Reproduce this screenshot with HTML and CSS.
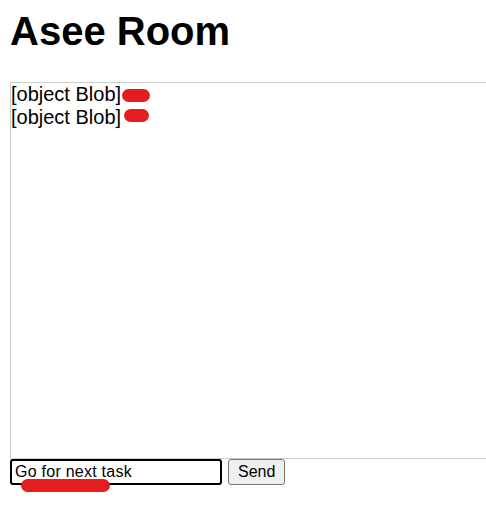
FILE: index.html
```html
<!DOCTYPE html>
<html>
<head>
<meta charset="utf-8">
<title>Asee Room</title>
<link rel="stylesheet" href="styles.css">
</head>
<body>
<h1 class="title">Asee Room</h1>
<div class="messages">
  <div class="msg">[object Blob]<span class="scribble s1"></span></div>
  <div class="msg">[object Blob]<span class="scribble s2"></span></div>
</div>
<form class="composer">
  <div class="field">
    <input class="text-input" type="text" value="Go for next task">
    <span class="scribble s3"></span>
  </div>
  <button class="send" type="button">Send</button>
</form>
</body>
</html>
```
FILE: styles.css
```css
html, body {
  margin: 0;
  background: #fff;
}
body {
  padding: 8px 10px;
  font-family: "Liberation Sans", Arial, sans-serif;
  color: #000;
  overflow: hidden;
}
.title {
  margin: 0 0 28px;
  font-size: 40px;
  font-weight: bold;
  line-height: 46px;
}
.messages {
  box-sizing: border-box;
  width: 500px;
  height: 377px;
  border: 1px solid #ccc;
  font-size: 20px;
  line-height: 23px;
}
.msg {
  white-space: nowrap;
}
.scribble {
  display: inline-block;
  background: #e41e20;
  border-radius: 8px;
  vertical-align: top;
}
.s1 {
  width: 28px;
  height: 13px;
  margin: 6px 0 0 1px;
}
.s2 {
  width: 25px;
  height: 13px;
  margin: 3px 0 0 3px;
  border-radius: 7px;
}
.composer {
  display: flex;
  gap: 6px;
  margin: 0;
}
.field {
  position: relative;
}
.text-input {
  box-sizing: border-box;
  width: 212px;
  height: 26px;
  margin: 0;
  padding: 1px 3px;
  border: 2px solid #000;
  border-radius: 3px;
  font-family: "Liberation Sans", Arial, sans-serif;
  font-size: 16px;
  letter-spacing: 0.25px;
  color: #000;
  outline: none;
  display: block;
}
.s3 {
  position: absolute;
  left: 11px;
  top: 20px;
  width: 89px;
  height: 13px;
  border-radius: 7px;
}
.send {
  box-sizing: border-box;
  height: 26px;
  margin: 0;
  padding: 1px 9px;
  background: #efefef;
  border: 1px solid #767676;
  border-radius: 3px;
  font-family: "Liberation Sans", Arial, sans-serif;
  font-size: 16px;
  color: #000;
}
```
